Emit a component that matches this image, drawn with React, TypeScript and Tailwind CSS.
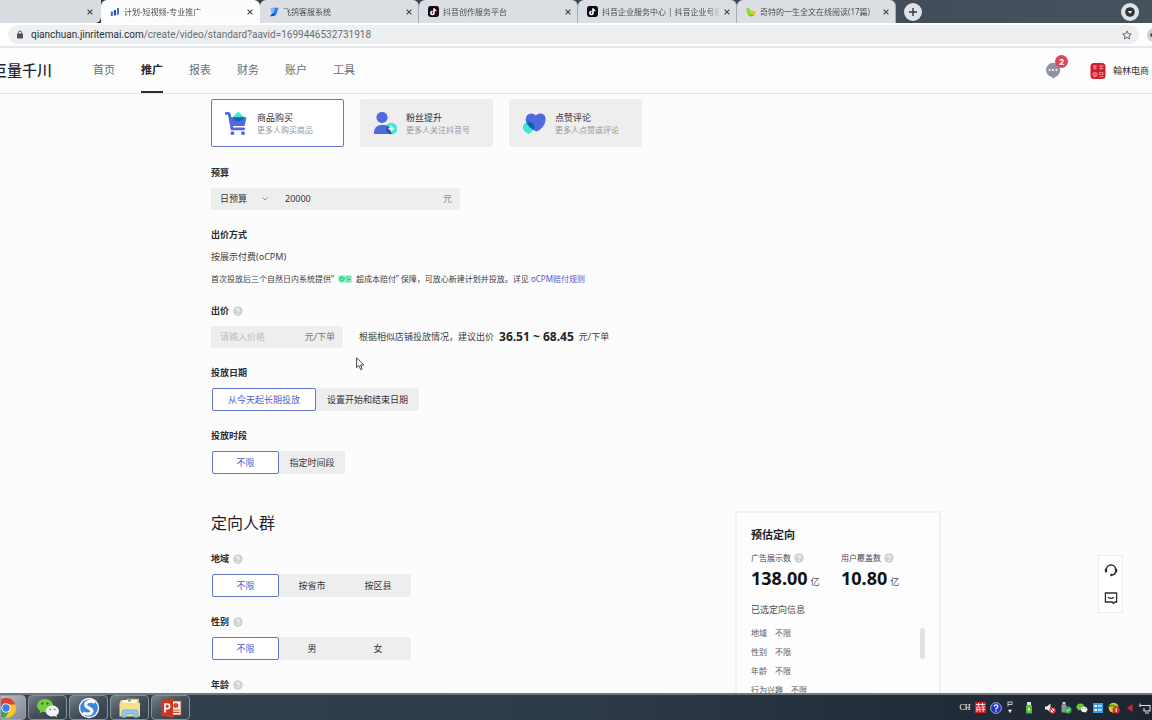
import { useState } from "react";
import type { ReactNode } from "react";

/* ---------- icons ---------- */

function ChartIcon() {
  return (
    <svg viewBox="0 0 10 10" className="size-[10px] shrink-0">
      <rect x="0.8" y="4.5" width="2" height="4.5" fill="#3b6fd8" />
      <rect x="3.8" y="3" width="2.2" height="5.4" fill="#2450b8" />
      <rect x="7" y="1" width="2" height="6.6" fill="#3b6fd8" />
    </svg>
  );
}

function PigeonIcon() {
  return (
    <svg viewBox="0 0 10 10" className="size-[10px] shrink-0">
      <path d="M3.600 .8H9.400L7.800 6.600Q7.200 8.800 4.800 9L1 9.200 3.200 6.600Z" fill="#2f7df0" />
      <path d="M1 1.200H6L4.600 6.200 3 7.400Z" fill="#79bdfb" />
      <path d="M1 9.200 4.200 6 6 7.400 4.800 9Z" fill="#1452c4" />
    </svg>
  );
}

function DouyinIcon() {
  return (
    <svg viewBox="0 0 12 12" className="size-[11px] shrink-0">
      <rect width="12" height="12" rx="2.6" fill="#120a14" />
      <g fill="none" strokeWidth="1.4">
        <path d="M6.2 2.4V7.4A1.7 1.7 0 1 1 4.5 5.7M6.2 2.6Q6.6 4.6 8.6 4.8" stroke="#35e0e6" />
        <path d="M6.9 2.8V7.8A1.7 1.7 0 1 1 5.2 6.1M6.9 3Q7.3 5 9.3 5.2" stroke="#f0305a" />
        <path d="M6.6 2.6V7.6A1.7 1.7 0 1 1 4.9 5.9M6.6 2.8Q7 4.8 9 5" stroke="#fff" />
      </g>
    </svg>
  );
}

function LeafIcon() {
  return (
    <svg viewBox="0 0 10 10" className="size-[10px] shrink-0">
      <path d="M.6 1.200Q4.400 1 5 4.800 6.800 3.600 9.600 4 9 9.200 5 9.400 .6 9 .6 1.200Z" fill="#6cc91c" />
      <path d="M5 4.800Q7 3.600 9.600 4 9 7.600 5.400 8Z" fill="#f2c71c" />
      <path d="M.6 1.200Q4 1.600 5 4.800L4.600 8Q1.200 6.800 .6 1.200Z" fill="#9bdc28" />
    </svg>
  );
}

function CloseIcon() {
  return (
    <svg viewBox="0 0 6 6" className="size-[6px]">
      <path d="M.6.6 5.4 5.4M5.4.6.6 5.4" stroke="#3c4043" strokeWidth="1.1" />
    </svg>
  );
}

function CartIcon() {
  return (
    <svg viewBox="0 0 24 26" className="h-[26px] w-6 shrink-0">
      <path d="M2.200 3.400H4.200Q5.200 3.400 5.400 4.400L8 18.800H19.800" fill="none" stroke="#4f6ae0" strokeWidth="2.800" strokeLinecap="round" />
      <path d="M5.400 7.200H22.400L20.600 16H7.400Z" fill="#4f6ae0" />
      <path d="M8.400 7.200 13.400 2.400Q14.300 1.700 15.200 2.400L20.400 7.200Z" fill="#3fe8d4" />
      <path d="M8.400 7.200H20.400L17.400 10.400Q14.400 12.400 11.400 10.400Z" fill="#1a5fae" />
      <circle cx="8.400" cy="23.200" r="1.900" fill="#4f6ae0" />
      <circle cx="19" cy="23.200" r="1.900" fill="#4f6ae0" />
    </svg>
  );
}

function FansIcon() {
  return (
    <svg viewBox="0 0 24 26" className="h-[26px] w-6 shrink-0">
      <circle cx="9" cy="7.4" r="5.6" fill="#4f6ae0" />
      <path d="M.8 24Q.8 15 8.6 15H11Q18.6 15 18.6 24Z" fill="#4f6ae0" />
      <circle cx="18.4" cy="18.6" r="5.8" fill="#3fe8d4" />
      <path d="M13.8 15.6Q18.6 18 18.6 24H16Q12.6 22.4 12.6 18.6 12.8 16.8 13.8 15.6Z" fill="#1a5fae" />
      <path d="M18.4 15.8V21.4M15.6 18.6H21.2" stroke="#fff" strokeWidth="1.8" />
    </svg>
  );
}

function LikeIcon() {
  return (
    <svg viewBox="0 0 24 26" className="h-[26px] w-6 shrink-0">
      <path d="M14.4 21.6Q3.4 16.6 3.6 9.4 4.2 3.6 9.4 3.4 12 3.4 13.8 5.4 16.4 2.8 19.6 3.6 24 5 23.6 10 22.6 18 14.4 21.6Z" fill="#4f6ae0" />
      <path d="M.8 17.4Q.8 13.4 4.6 13.2L8 11Q13 13.4 12.8 17.4 11.6 20.6 6.6 24 1 21 .8 17.4Z" fill="#3fe8d4" />
      <path d="M4.6 13.2 8 11Q13 13.4 12.8 17.4L11.4 20Q6.6 17.2 4.6 13.2Z" fill="#1a5fae" />
    </svg>
  );
}

function HelpIcon() {
  return (
    <svg viewBox="0 0 10 10" className="size-[10px] shrink-0" aria-hidden="true">
      <circle cx="5" cy="5" r="4.8" fill="#d2d2d2" />
      <path d="M3.6 4.1A1.4 1.4 0 1 1 5 5.5V6.1" fill="none" stroke="#fff" strokeWidth=".9" />
      <circle cx="5" cy="7.4" r=".6" fill="#fff" />
    </svg>
  );
}

function ChevronIcon() {
  return (
    <svg viewBox="0 0 6 4" className="h-1 w-[6px]">
      <path d="M.5.6 3 3 5.5.6" fill="none" stroke="#777" strokeWidth=".8" />
    </svg>
  );
}

function WechatIcon({ className }: { className: string }) {
  return (
    <svg viewBox="0 0 24 20" className={className}>
      <path d="M9 1C4.400 1 1 4 1 7.600 1 9.800 2.200 11.600 4.100 12.800L3.400 15.400 6.200 13.800Q7.500 14.200 9 14.200C13.400 14.200 17 11.400 17 7.600S13.400 1 9 1Z" fill="#6fd03c" />
      <circle cx="6.300" cy="5.600" r="1.100" fill="#2b5a1a" />
      <circle cx="11.600" cy="5.600" r="1.100" fill="#2b5a1a" />
      <path d="M16.400 7.400C12.600 7.400 9.800 9.900 9.800 12.900S12.600 18.400 16.400 18.400Q17.600 18.400 18.600 18L21 19.400 20.400 17.200C22 16.200 23 14.700 23 12.900 23 9.900 20.200 7.400 16.400 7.400Z" fill="#f0f4f2" />
      <circle cx="14.200" cy="11.400" r=".9" fill="#6b7a75" />
      <circle cx="18.600" cy="11.400" r=".9" fill="#6b7a75" />
    </svg>
  );
}

function ChromeIcon() {
  return (
    <svg viewBox="0 0 22 22" className="size-[22px] shrink-0">
      <circle cx="11" cy="11" r="10" fill="#f7c92f" />
      <path d="M11 11 2.340 6A10 10 0 0 1 20.400 7.600H11Z" fill="#e2402f" />
      <path d="M2.340 6A10 10 0 0 0 10 21L14.600 13.500 11 11Z" fill="#3aa757" />
      <path d="M2.340 6 8 14 11 11 11 7.600Z" fill="#3aa757" />
      <path d="M2.340 6 7.200 11 11 7.600V5Z" fill="#e2402f" />
      <circle cx="11" cy="11" r="4.700" fill="#fff" />
      <circle cx="11" cy="11" r="3.700" fill="#3b7ded" />
    </svg>
  );
}

function SogouIcon() {
  return (
    <svg viewBox="0 0 22 22" className="size-[22px]">
      <circle cx="11" cy="11" r="10.200" fill="#f1f6fb" />
      <circle cx="11" cy="11" r="8.800" fill="#3d87d8" />
      <path d="M17 5.200Q12 2.800 8.600 5.400 6.400 8 9.400 10.200L12.800 12.200Q15.200 14.200 12.600 16.200 9 18 5 15.800" fill="none" stroke="#fff" strokeWidth="3.200" />
    </svg>
  );
}

function FolderIcon() {
  return (
    <svg viewBox="0 0 24 22" className="h-[22px] w-6">
      <path d="M2 3.500H8L9.500 1.800H21V19H2Z" fill="#e6c65c" />
      <path d="M4 3H19V7H4Z" fill="#fbf6df" />
      <path d="M10 2.500H13V4.500H10Z" fill="#5fae5a" />
      <path d="M1.500 6H22V19.500H1.500Z" fill="#f6df8b" />
      <path d="M4 20.500V15Q4 13 6 13H18Q20 13 20 15V20.500H16V17H8V20.500Z" fill="#8cc9ea" stroke="#5a9cc4" strokeWidth=".6" />
    </svg>
  );
}

function SlidesIcon() {
  return (
    <svg viewBox="0 0 22 22" className="size-[22px]">
      <rect x="10" y="4" width="11" height="14" fill="#f7efec" stroke="#c8452c" strokeWidth=".8" />
      <circle cx="15.800" cy="8.600" r="2.500" fill="#d24a2e" />
      <path d="M13 13H19.500M13 15.400H19.500" stroke="#d24a2e" strokeWidth="1.100" />
      <path d="M1 3.200 13 1V21L1 18.800Z" fill="#c8391f" />
      <path d="M5 15.400V7H7.400Q9.600 7 9.600 9.300T7.400 11.700H5" fill="none" stroke="#fff" strokeWidth="1.700" />
    </svg>
  );
}

/* ---------- browser chrome ---------- */

const tabs: { title: string; icon: ReactNode; active?: boolean }[] = [
  { title: "计划-短视频-专业推广", icon: <ChartIcon />, active: true },
  { title: "飞鸽客服系统", icon: <PigeonIcon /> },
  { title: "抖音创作服务平台", icon: <DouyinIcon /> },
  { title: "抖音企业服务中心 | 抖音企业号服", icon: <DouyinIcon /> },
  { title: "奇特的一生全文在线阅读(17篇)", icon: <LeafIcon /> },
];

function TabStrip() {
  return (
    <div className="flex h-[23px] shrink-0 items-stretch bg-linear-to-r from-[#2f3a45] to-[#46535f]">
      <div className="flex w-[101px] shrink-0 items-center justify-end rounded-br-md bg-[#d9dce0] pr-2">
        <button aria-label="关闭标签页"><CloseIcon /></button>
      </div>
      {tabs.map((t, i) => (
        <div
          key={i}
          className={
            t.active
              ? "flex w-[159px] shrink-0 items-center gap-1 rounded-t-md bg-[#fcfcfd] pr-[7px] pl-[9px]"
              : "flex w-[159px] shrink-0 items-center gap-1 rounded-t-md border-r border-[#a9adb2] bg-[#dbdee2] pr-[6px] pl-[9px]"
          }
        >
          {t.icon}
          <span className="flex-1 overflow-hidden mask-r-from-90% text-[8px] whitespace-nowrap text-[#4a4d52]">{t.title}</span>
          <button aria-label="关闭标签页"><CloseIcon /></button>
        </div>
      ))}
      <div className="flex flex-1 items-center justify-between pr-[13px] pl-2">
        <button aria-label="新标签页" className="flex size-[18px] items-center justify-center rounded-full bg-[#dfe3e7]">
          <svg viewBox="0 0 10 10" className="size-[10px]"><path d="M5 1V9M1 5H9" stroke="#30353a" strokeWidth="1.400" /></svg>
        </button>
        <button aria-label="搜索标签页" className="flex size-[18px] items-center justify-center rounded-full bg-[#dfe3e7]">
          <svg viewBox="0 0 10 10" className="size-[10px]"><circle cx="5" cy="5" r="4.800" fill="#30353a" /><path d="M2.800 4H7.200L5 6.800Z" fill="#fff" /></svg>
        </button>
      </div>
    </div>
  );
}

function AddressBar() {
  return (
    <div className="flex h-[25px] shrink-0 items-center border-b-2 border-[#e6e8eb] bg-white pl-2">
      <div className="flex h-[19px] flex-1 items-center rounded-full bg-[#edeff1] pr-[7px] pl-2">
        <svg viewBox="0 0 8 9" className="mr-[7px] h-[9px] w-2">
          <rect x="1" y="3.600" width="6" height="4.800" rx=".6" fill="#4d5156" />
          <path d="M2.400 4V2.400Q2.400 1 4 1T5.600 2.400V4" fill="none" stroke="#4d5156" strokeWidth=".9" />
        </svg>
        <p className="flex-1 font-['Roboto',sans-serif] text-[10px] text-[#6a6e73]">
          <span className="text-[#2a2d31]">qianchuan.jinritemai.com</span>/create/video/standard?aavid=1699446532731918
        </p>
        <button aria-label="收藏">
          <svg viewBox="0 0 10 10" className="size-[10px]"><path d="M5 .9 6.250 3.700 9.300 4 7 6 7.700 9 5 7.400 2.300 9 3 6 .7 4 3.750 3.700Z" fill="none" stroke="#555a60" strokeWidth=".9" /></svg>
        </button>
      </div>
      <div className="ml-2 w-[5px] overflow-hidden">
        <div className="flex size-[14px] items-center rounded-full bg-[#cdd1d8] pl-[3px]"><span className="size-1 rounded-full bg-[#555]" /></div>
      </div>
    </div>
  );
}

function SiteNav() {
  const items = ["首页", "推广", "报表", "财务", "账户", "工具"];
  return (
    <header className="flex h-[46px] shrink-0 items-stretch border-b border-[#e4e4e6] bg-[#fdfdfd]">
      <a href="#" className="-ml-2 flex w-[101px] shrink-0 items-center text-[15px] font-medium whitespace-nowrap text-[#23263a]">巨量千川</a>
      <nav className="flex flex-1 gap-[26px]">
        {items.map((n) => (
          <a
            key={n}
            href="#"
            aria-current={n === "推广" ? "page" : undefined}
            className={
              n === "推广"
                ? "flex items-center border-y-2 border-t-transparent border-b-[#2a2c34] text-[11px] font-bold text-[#26282e]"
                : "flex items-center text-[11px] text-[#6b6d72]"
            }
          >
            {n}
          </a>
        ))}
      </nav>
      <div className="flex items-center pr-[3px]">
        <button aria-label="消息" className="relative mr-[29px]">
          <svg viewBox="0 0 16 17" className="h-[17px] w-4"><path d="M8 .8A7.200 7.200 0 0 1 10.400 14.800L8.400 16.600 6.600 15A7.200 7.200 0 0 1 8 .8Z" fill="#8f92a3" /><g fill="#fff"><circle cx="4.600" cy="8" r="1" /><circle cx="8" cy="8" r="1" /><circle cx="11.400" cy="8" r="1" /></g></svg>
          <span className="absolute -top-[7px] left-[10px] flex size-[13px] items-center justify-center rounded-full bg-[#e0455a] text-[9px] font-bold text-white">2</span>
        </button>
        <svg viewBox="0 0 16 18" className="mr-[7px] h-[18px] w-4">
          <rect x=".5" y="1" width="15" height="16" rx="3.500" fill="#cf1f31" />
          <path d="M3 4H7M3 6H7M5 3V8M9 4H13.500M9 6.400H13.500M11.200 3V8M3 11H7V14H3ZM5 10V15.500M9.500 10.500H13V12.500H9.500ZM9.500 14.500H13.500" fill="none" stroke="#f3a0a2" strokeWidth=".8" />
        </svg>
        <span className="text-[9px] text-[#333]">翰林电商</span>
      </div>
    </header>
  );
}

/* ---------- form ---------- */

const goals = [
  { title: "商品购买", note: "更多人购买商品", icon: <CartIcon /> },
  { title: "粉丝提升", note: "更多人关注抖音号", icon: <FansIcon /> },
  { title: "点赞评论", note: "更多人点赞或评论", icon: <LikeIcon /> },
];

function Field({ label, help, htmlFor, children }: { label: string; help?: boolean; htmlFor?: string; children?: ReactNode }) {
  return (
    <section className="pb-[17px]">
      <div className="mb-[7px] flex h-4 items-center gap-1">
        {htmlFor ? (
          <label htmlFor={htmlFor} className="font-bold text-[#2b2b2f]">{label}</label>
        ) : (
          <h3 className="font-bold text-[#2b2b2f]">{label}</h3>
        )}
        {help && <HelpIcon />}
      </div>
      {children}
    </section>
  );
}

function Segments({ label, options, wide }: { label: string; options: string[]; wide?: boolean }) {
  const [value, setValue] = useState(options[0]);
  return (
    <div role="group" aria-label={label} className="ml-px flex h-[23px] w-fit rounded-xs bg-[#eeeeef]">
      {options.map((o) => (
        <button
          type="button"
          key={o}
          aria-pressed={o === value}
          onClick={() => setValue(o)}
          className={
            (wide ? "w-[103px] first:w-[104px] " : "w-[66px] first:w-[67px] ") +
            (o === value ? "rounded-xs border border-[#6377c8] bg-white text-[#4b5cc8]" : "text-[#333338]")
          }
        >
          {o}
        </button>
      ))}
    </div>
  );
}

function PlanForm() {
  const [goal, setGoal] = useState(0);
  return (
    <form className="flex-1" onSubmit={(e) => e.preventDefault()}>
      <div className="flex gap-4 pt-[5px] pb-[18px]">
        {goals.map((g, i) => (
          <button
            type="button"
            key={g.title}
            aria-pressed={goal === i}
            onClick={() => setGoal(i)}
            className={
              "flex h-12 w-[133px] items-center gap-[9px] rounded-xs border pl-3 text-left " +
              (goal === i ? "border-[#6a76c4] bg-white" : "border-[#eeeeef] bg-[#eeeeef]")
            }
          >
            {g.icon}
            <span className="flex flex-col">
              <span className="text-[9px] leading-[13px] text-[#2d2d31]">{g.title}</span>
              <span className="text-[8px] leading-[12px] text-[#98989c]">{g.note}</span>
            </span>
          </button>
        ))}
      </div>

      <Field label="预算" htmlFor="budget">
        <div className="flex h-[22px] w-[249px] items-center rounded-xs bg-[#eeeeef] pr-2 pl-[9px]">
          <select aria-label="预算类型" className="w-[42px] appearance-none bg-transparent text-[#333338]">
            <option>日预算</option>
            <option>总预算</option>
          </select>
          <ChevronIcon />
          <input id="budget" defaultValue="20000" className="ml-[17px] min-w-0 flex-1 bg-transparent text-[#333338] outline-none" />
          <span className="text-[#8c8c90]">元</span>
        </div>
      </Field>

      <section className="pb-4">
        <h3 className="mb-[6px] h-4 leading-4 font-bold text-[#2b2b2f]">出价方式</h3>
        <p className="mb-[6px] h-4 leading-4 text-[#3c3c40]">按展示付费(oCPM)</p>
        <p className="flex h-4 items-center text-[8px] whitespace-nowrap text-[#3c3c40]">
          首次投放后三个自然日内系统提供“
          <span className="mx-1 flex h-2 items-center rounded-xs bg-[#b5f2d3] px-px text-[6px] leading-none text-[#22c57c]">
            <svg viewBox="0 0 6 6" className="size-[6px]"><path d="M3 .2 5.700 1V3.200Q5.400 5.200 3 5.900 .6 5.200 .3 3.200V1Z" fill="#2ed28a" /><path d="M1.600 3 2.700 4 4.400 2.200" fill="none" stroke="#fff" strokeWidth=".7" /></svg>
            保
          </span>
          超成本赔付”&nbsp;保障，可放心新建计划并投放。详见&nbsp;<a href="#" className="text-[#5457c9]">oCPM赔付规则</a>
        </p>
      </section>

      <Field label="出价" help htmlFor="bid">
        <div className="flex h-[22px] items-center">
          <div className="flex h-[22px] w-[132px] items-center rounded-xs bg-[#eeeeef] pr-2 pl-[9px]">
            <input id="bid" placeholder="请输入价格" className="min-w-0 flex-1 bg-transparent outline-none placeholder:text-[#bcbcc0]" />
            <span className="text-[#77777b]">元/下单</span>
          </div>
          <p className="ml-4 flex items-center gap-[5px] whitespace-nowrap text-[#3c3c40]">
            根据相似店铺投放情况，建议出价
            <strong className="text-[12px] leading-4 font-bold text-[#26262a]">36.51 ~ 68.45</strong>
            元/下单
          </p>
        </div>
      </Field>

      <Field label="投放日期"><Segments label="投放日期" options={["从今天起长期投放", "设置开始和结束日期"]} wide /></Field>
      <Field label="投放时段"><Segments label="投放时段" options={["不限", "指定时间段"]} /></Field>

      <h2 className="mt-5 mb-4 h-6 text-[16px] leading-6 text-[#222226]">定向人群</h2>
      <Field label="地域" help><Segments label="地域" options={["不限", "按省市", "按区县"]} /></Field>
      <Field label="性别" help><Segments label="性别" options={["不限", "男", "女"]} /></Field>
      <Field label="年龄" help />
    </form>
  );
}

function Metric({ label, value }: { label: string; value: string }) {
  return (
    <div className="w-[90px] shrink-0">
      <dt className="flex h-3 items-center gap-[3px] text-[8px] whitespace-nowrap text-[#4a4a4e]">{label}<HelpIcon /></dt>
      <dd className="mt-[2px] flex h-6 items-baseline gap-[3px] text-[9px] leading-6 text-[#4a4a4e]">
        <strong className="text-[18px] leading-6 font-bold text-[#121214]">{value}</strong>亿
      </dd>
    </div>
  );
}

function EstimateCard() {
  const rows = ["地域", "性别", "年龄", "行为兴趣"];
  return (
    <aside className="mt-[417px] h-fit w-[206px] shrink-0 border-2 border-[#f1f1f2] bg-[#fdfdfd] pt-[14px] pr-[14px] pb-10 pl-[14px]">
      <h2 className="h-4 text-[11px] leading-4 font-bold text-[#222226]">预估定向</h2>
      <dl className="mt-[9px] flex">
        <Metric label="广告展示数" value="138.00" />
        <Metric label="用户覆盖数" value="10.80" />
      </dl>
      <h3 className="mt-3 h-4 leading-4 text-[#4a4a4e]">已选定向信息</h3>
      <div className="mt-[5px] flex items-start justify-between">
        <ul className="text-[8px] text-[#5c5c60]">
          {rows.map((r) => (
            <li key={r} className="flex h-[19px] items-center gap-2"><span>{r}</span><span>不限</span></li>
          ))}
        </ul>
        <div className="mt-[5px] h-[31px] w-[5px] rounded-sm bg-[#e2e2e4]" />
      </div>
    </aside>
  );
}

function HelpDock() {
  return (
    <div className="absolute top-[461px] right-[29px] flex w-[25px] flex-col items-center gap-[14px] border border-[#ececee] bg-white py-[7px]">
      <button aria-label="在线客服">
        <svg viewBox="0 0 14 14" className="size-[14px]"><path d="M2.400 8.400V6.600A4.600 4.600 0 0 1 11.600 6.600V8.400Q11.400 11.600 8 12" fill="none" stroke="#2b2d33" strokeWidth="1.400" /><rect x=".8" y="5.600" width="2.200" height="3.800" rx="1" fill="#2b2d33" /><rect x="11" y="5.600" width="2.200" height="3.800" rx="1" fill="#2b2d33" /><circle cx="7.400" cy="12" r="1.200" fill="#2b2d33" /></svg>
      </button>
      <button aria-label="意见反馈">
        <svg viewBox="0 0 14 14" className="size-[14px]"><path d="M1.400 2H12.600V11H10.600L9.400 12.400 8.200 11H1.400Z" fill="none" stroke="#2b2d33" strokeWidth="1.300" /><path d="M4 6.200Q7 8.600 10 6.200" fill="none" stroke="#2b2d33" strokeWidth="1.200" /></svg>
      </button>
    </div>
  );
}

/* ---------- taskbar ---------- */

function Taskbar() {
  const apps = [
    { name: "微信", icon: <WechatIcon className="h-5 w-6" /> },
    { name: "搜狗浏览器", icon: <SogouIcon /> },
    { name: "文件夹", icon: <FolderIcon /> },
    { name: "演示文稿", icon: <SlidesIcon /> },
  ];
  return (
    <footer className="flex h-[27px] shrink-0 items-stretch justify-between border-t-2 border-[#70797f] bg-linear-to-r from-[#34414f] via-[#2d3a47] to-[#1c2430]">
      <div className="flex gap-[2px]">
        <button aria-label="浏览器" className="flex w-[26px] items-center justify-end overflow-hidden rounded-r-sm border border-[#9aa2aa] bg-linear-to-br from-[#b9bfc4] to-[#7f8890] pr-2">
          <ChromeIcon />
        </button>
        {apps.map((a) => (
          <button key={a.name} aria-label={a.name} className="flex w-[39px] items-center justify-center overflow-hidden rounded-sm border border-[#87919a] bg-linear-to-br from-[#77818a] via-[#434e59] to-[#333f4b]">
            {a.icon}
          </button>
        ))}
      </div>
      <div className="flex items-center">
        <span className="w-4 text-center font-['Liberation_Serif',serif] text-[8px] text-white">CH</span>
        <span className="flex w-[15px] justify-center">
          <svg viewBox="0 0 11 11" className="size-[11px]"><rect width="11" height="11" fill="#d8202c" /><path d="M1 2.500H10M3.500 1V4M7.500 1V4M1.500 5H5V10M1.500 7.500H5M2 5V10M6.500 5H10M8.200 4.500V10M6.500 7.500H10" fill="none" stroke="#fff" strokeWidth=".8" /></svg>
        </span>
        <span className="flex w-[15px] justify-center">
          <svg viewBox="0 0 12 12" className="size-3"><circle cx="6" cy="6" r="5.400" fill="#1f35b8" stroke="#b7c2f2" strokeWidth=".8" /><path d="M4.200 4.700A1.800 1.800 0 1 1 6 6.400V7.400" fill="none" stroke="#fff" strokeWidth="1.200" /><circle cx="6" cy="9" r=".8" fill="#fff" /></svg>
        </span>
        <span className="flex w-[13px] justify-center">
          <svg viewBox="0 0 8 14" className="h-[14px] w-2"><rect x="2" y="1" width="4" height="2.400" fill="none" stroke="#e6e9ec" strokeWidth=".8" /><path d="M2 3.400V5.400M2.500 9 4 11.500 5.500 9Z" stroke="#e6e9ec" strokeWidth=".8" fill="#e6e9ec" /></svg>
        </span>
        <span className="flex w-[26px] justify-center">
          <svg viewBox="0 0 8 12" className="h-3 w-2"><rect x="2" y="0" width="4" height="3" fill="#d8e6d0" /><rect x="1" y="3" width="6" height="8.500" rx="1" fill="#4fc233" /><path d="M4 5V9.500M2.800 7.500H5.200" stroke="#fff" strokeWidth=".8" /></svg>
        </span>
        <span className="flex w-4 justify-center">
          <svg viewBox="0 0 12 12" className="size-3"><path d="M1 4.500H3L6.500 1.500V10.500L3 7.500H1Z" fill="#eceff1" /><circle cx="8.500" cy="8.500" r="2.600" fill="#fff" stroke="#d62b2b" strokeWidth="1.100" /><path d="M6.800 6.800 10.200 10.200" stroke="#d62b2b" strokeWidth="1" /></svg>
        </span>
        <span className="flex w-4 justify-center">
          <svg viewBox="0 0 12 12" className="size-3"><rect x="2.500" y="0" width="3" height="2.500" fill="#c9ced2" /><rect x="1.500" y="2.500" width="5" height="8" rx="1" fill="#8d969d" /><circle cx="8" cy="8" r="3.500" fill="#36b34a" /><path d="M6.400 8 7.600 9.200 9.700 6.800" fill="none" stroke="#fff" strokeWidth="1" /></svg>
        </span>
        <span className="flex w-4 justify-center"><WechatIcon className="h-[10px] w-3" /></span>
        <span className="flex w-4 justify-center">
          <svg viewBox="0 0 10 10" className="size-[10px]"><rect width="10" height="10" fill="#3c9be8" /><path d="M1.500 2H4V4H1.500ZM1.500 6H4V8H1.500ZM5 2.200H8.800V3.600H5ZM5 6.200H8.800V7.600H5Z" fill="#fff" /></svg>
        </span>
        <span className="flex w-4 justify-center">
          <svg viewBox="0 0 12 12" className="size-3"><circle cx="5.600" cy="5.800" r="5" fill="#e8c51e" /><path d="M1 4.500Q5.500 2 10 6" stroke="#3ea83a" strokeWidth="2" fill="none" /><circle cx="8.200" cy="8" r="3.600" fill="#d92b25" /><path d="M8.200 6V10" stroke="#fff" strokeWidth="1.100" /></svg>
        </span>
        <span className="flex w-4 justify-center">
          <svg viewBox="0 0 8 10" className="h-[10px] w-2"><path d="M6.500 1V9L1 5Z" fill="#c92b2b" /></svg>
        </span>
        <span className="flex w-[14px] justify-center">
          <svg viewBox="0 0 12 12" className="size-3"><path d="M1 1.500V5M1 3.500H4M3.500 3.500H11V9H5V6M6 11H10" fill="none" stroke="#dfe3e6" strokeWidth="1.100" /></svg>
        </span>
      </div>
    </footer>
  );
}

export default function App() {
  return (
    <div className="flex h-screen flex-col overflow-hidden bg-[#fcfcfd] font-['Noto_Sans','Noto_Sans_CJK_SC',sans-serif] text-[9px]">
      <TabStrip />
      <AddressBar />
      <SiteNav />
      <main className="relative min-h-0 flex-1 overflow-hidden">
        <div className="mx-auto flex max-w-[730px]">
          <PlanForm />
          <EstimateCard />
        </div>
        <HelpDock />
        <svg viewBox="0 0 9 14" className="pointer-events-none absolute top-[263px] left-[356px] h-[14px] w-[9px]">
          <path d="M.6.8V10.600L2.900 8.500 4.600 12.600 6.200 11.900 4.500 8H7.800Z" fill="#fff" stroke="#333" strokeWidth=".9" />
        </svg>
      </main>
      <Taskbar />
    </div>
  );
}
